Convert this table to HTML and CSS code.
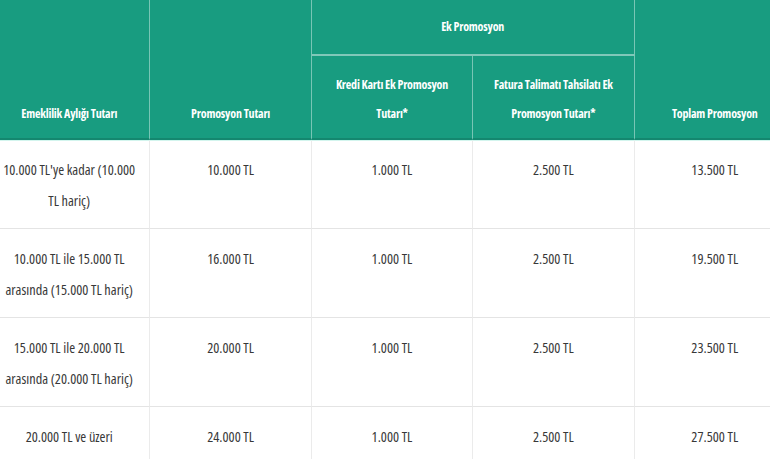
FILE: index.html
```html
<!DOCTYPE html>
<html lang="tr">
<head>
<meta charset="utf-8">
<title>Promosyon Tablosu</title>
<link rel="stylesheet" href="styles.css">
</head>
<body>
<table class="promo">
  <colgroup>
    <col class="c"><col class="c"><col class="c"><col class="c"><col class="c">
  </colgroup>
  <thead>
    <tr class="top">
      <th rowspan="2" class="head">Emeklilik Aylığı Tutarı</th>
      <th rowspan="2" class="head">Promosyon Tutarı</th>
      <th colspan="2" class="group">Ek Promosyon</th>
      <th rowspan="2" class="head">Toplam Promosyon</th>
    </tr>
    <tr class="sub">
      <th class="head">Kredi Kartı Ek Promosyon Tutarı*</th>
      <th class="head">Fatura Talimatı Tahsilatı Ek Promosyon Tutarı*</th>
    </tr>
  </thead>
  <tbody>
    <tr class="first">
      <td>10.000 TL'ye kadar (10.000 TL hariç)</td>
      <td>10.000 TL</td>
      <td>1.000 TL</td>
      <td>2.500 TL</td>
      <td>13.500 TL</td>
    </tr>
    <tr>
      <td>10.000 TL ile 15.000 TL arasında (15.000 TL hariç)</td>
      <td>16.000 TL</td>
      <td>1.000 TL</td>
      <td>2.500 TL</td>
      <td>19.500 TL</td>
    </tr>
    <tr>
      <td>15.000 TL ile 20.000 TL arasında (20.000 TL hariç)</td>
      <td>20.000 TL</td>
      <td>1.000 TL</td>
      <td>2.500 TL</td>
      <td>23.500 TL</td>
    </tr>
    <tr>
      <td>20.000 TL ve üzeri</td>
      <td>24.000 TL</td>
      <td>1.000 TL</td>
      <td>2.500 TL</td>
      <td>27.500 TL</td>
    </tr>
  </tbody>
</table>
</body>
</html>
```

FILE: styles.css
```css
html, body {
  margin: 0;
  padding: 0;
  background: #ffffff;
  overflow: hidden;
}

.promo {
  margin-left: -11px;
  width: 807px;
  table-layout: fixed;
  border-collapse: separate;
  border-spacing: 0;
  font-family: "Open Sans", "Liberation Sans", sans-serif;
  font-stretch: 75%;
  color: #383838;
}

.promo th,
.promo td {
  box-sizing: border-box;
  text-align: center;
}

.promo th {
  background: #189c80;
  color: #ffffff;
  font-size: 12px;
  font-weight: 700;
  letter-spacing: -0.2px;
  line-height: 29px;
  border-right: 1px solid rgba(255, 255, 255, 0.42);
}

.promo th.head {
  vertical-align: bottom;
  padding: 0 12px 10px;
  border-bottom: 2px solid #14876f;
}

.promo th.group {
  height: 56px;
  padding: 0 12px;
  line-height: 54px;
  vertical-align: middle;
  border-bottom: 2px solid rgba(255, 255, 255, 0.45);
}

.promo tr.sub th {
  height: 84px;
}

.promo td {
  vertical-align: top;
  font-size: 14.3px;
  line-height: 31px;
  padding: 14px 12px 12px;
  border-right: 1px solid #ebebeb;
  border-bottom: 1px solid #e4e4e4;
}

.promo tr.first td {
  padding-top: 13px;
  border-top: 1px solid #d3f5ee;
}
```
